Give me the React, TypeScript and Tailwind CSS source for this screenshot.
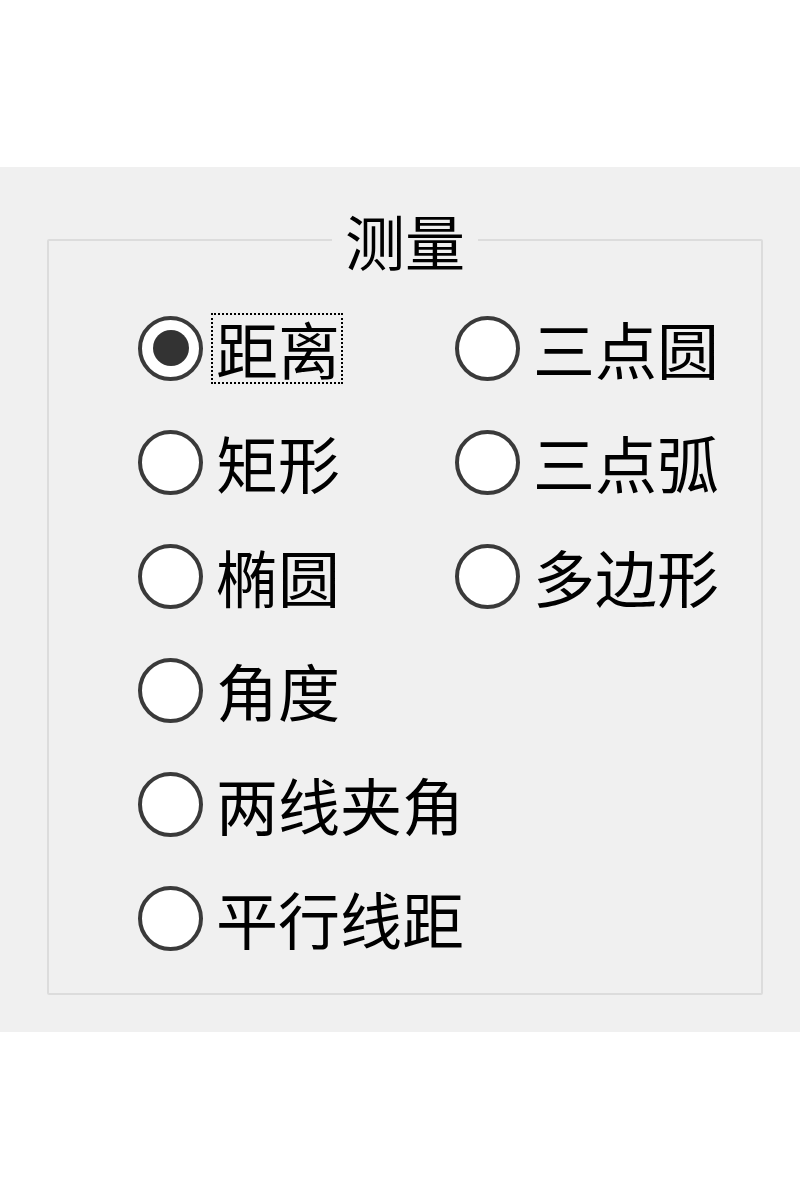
import { useState } from 'react';

const leftItems = ['距离', '矩形', '椭圆', '角度', '两线夹角', '平行线距'];
const rightItems = ['三点圆', '三点弧', '多边形'];

const Radio = ({ checked }: { checked: boolean }) => (
  <span className="flex h-[65px] w-[65px] shrink-0 items-center justify-center rounded-full border-[4px] border-[#3a3a3a] bg-white">
    {checked && <span className="h-[36px] w-[36px] rounded-full bg-[#333333]" />}
  </span>
);

export default function App() {
  const [selected, setSelected] = useState('距离');
  const items = [...leftItems, ...rightItems];

  return (
    <div className="min-h-[1200px] bg-white font-['Noto_Sans_CJK_SC','Noto_Sans',sans-serif] text-black">
      <div className="h-[167px]" />
      <div className="h-[865px] bg-[#f0f0f0] pt-[43px]">
        <fieldset className="ml-[47px] h-[785px] w-[716px] rounded-[2px] border-2 border-[#dcdcdc]">
          <legend className="mx-auto px-[13px] text-[60px] leading-[60px]">测量</legend>
          <div className="mt-[21px] grid grid-flow-col grid-cols-[317px_auto] grid-rows-[repeat(6,114px)] pl-[89px]">
            {items.map((label) => {
              const checked = selected === label;
              return (
                <button
                  key={label}
                  type="button"
                  onClick={() => setSelected(label)}
                  className="flex items-center gap-[8px] whitespace-nowrap text-left"
                >
                  <Radio checked={checked} />
                  <span
                    className={`pl-[3px] pr-[1px] text-[62px] leading-[67px] ${
                      checked ? 'border-2 border-dotted border-black' : 'border-2 border-transparent'
                    }`}
                  >
                    {label}
                  </span>
                </button>
              );
            })}
          </div>
        </fieldset>
      </div>
    </div>
  );
}
